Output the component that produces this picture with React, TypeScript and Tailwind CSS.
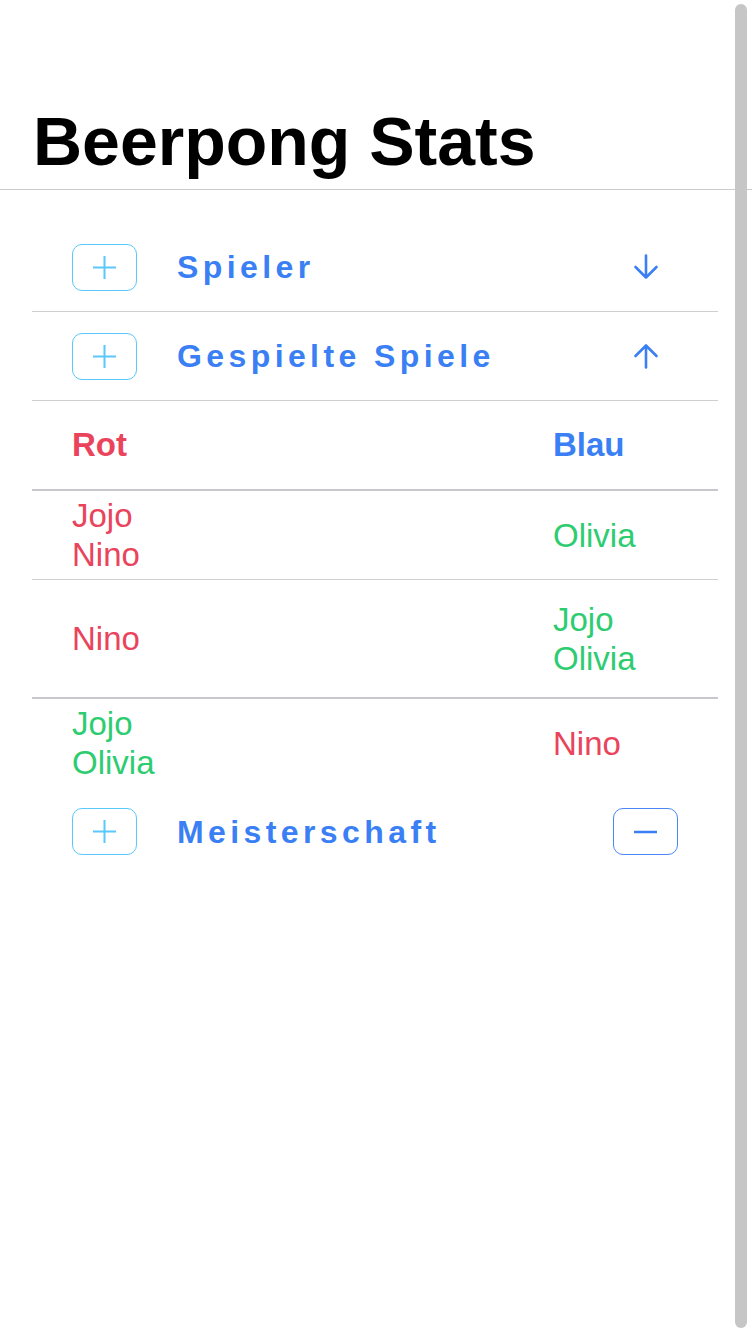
import React from 'react'

const BLUE = 'text-[#3b7ff5]'

function PlusButton() {
  return (
    <div className="flex h-[47px] w-[65px] shrink-0 items-center justify-center rounded-[10px] border-[1.5px] border-[#5ac8fa]">
      <svg width="23" height="23" viewBox="0 0 23 23" fill="none" stroke="#5ac8fa" strokeWidth="2">
        <path d="M11.5 0v23M0 11.5h23" />
      </svg>
    </div>
  )
}

function MinusButton() {
  return (
    <div className="flex h-[47px] w-[65px] shrink-0 items-center justify-center rounded-[10px] border-[1.5px] border-[#4a86f7]">
      <svg width="23" height="4" viewBox="0 0 23 4" fill="none" stroke="#3b7ff5" strokeWidth="2.5">
        <path d="M0 2h23" />
      </svg>
    </div>
  )
}

function Arrow({ up }: { up?: boolean }) {
  return (
    <div className="flex w-[65px] shrink-0 justify-center">
      <svg
        width="26"
        height="26"
        viewBox="0 0 26 26"
        fill="none"
        stroke="#3b7ff5"
        strokeWidth="2.6"
        strokeLinecap="round"
        strokeLinejoin="round"
        className={up ? 'rotate-180' : ''}
      >
        <path d="M13 1.5v22M2.5 13l10.5 10.5L23.5 13" />
      </svg>
    </div>
  )
}

function SectionRow({ label, right, border = true }: { label: string; right: React.ReactNode; border?: boolean }) {
  return (
    <div className={`flex h-[89px] items-center px-10 ${border ? 'border-b border-[#cfcfd2]' : ''}`}>
      <PlusButton />
      <span className={`ml-10 flex-1 text-[32px] font-bold tracking-[4.4px] ${BLUE}`}>{label}</span>
      {right}
    </div>
  )
}

const RED = 'text-[#e9445c]'
const GREEN = 'text-[#2ecc71]'

const GAMES = [
  { red: ['Jojo', 'Nino'], redCls: RED, blue: ['Olivia'], blueCls: GREEN, h: 'h-[89px] border-b border-[#cfcfd2]' },
  { red: ['Nino'], redCls: RED, blue: ['Jojo', 'Olivia'], blueCls: GREEN, h: 'h-[119px] border-b-2 border-[#c8c8cc]' },
  { red: ['Jojo', 'Olivia'], redCls: GREEN, blue: ['Nino'], blueCls: RED, h: 'h-[88px]' },
]

export default function App() {
  return (
    <div className="relative min-h-[1336px] bg-white font-['Liberation_Sans',Arial,sans-serif]">
      <header className="border-b border-[#cccccc] px-[33px] pb-[14px] pt-[107px]">
        <h1 className="text-[68px] font-bold leading-[68px] text-black">Beerpong Stats</h1>
      </header>

      <div className="ml-8 mr-[34px] mt-[33px]">
        <SectionRow label="Spieler" right={<Arrow />} />
        <SectionRow label="Gespielte Spiele" right={<Arrow up />} />

        <div className="flex h-[90px] items-center border-b-2 border-[#c8c8cc] pl-10 text-[33px] font-bold">
          <span className={`flex-1 ${RED}`}>Rot</span>
          <span className={`w-[165px] ${BLUE}`}>Blau</span>
        </div>

        {GAMES.map((g, i) => (
          <div key={i} className={`flex items-center pl-10 text-[33px] leading-[39px] ${g.h}`}>
            <div className={`flex flex-1 flex-col ${g.redCls}`}>
              {g.red.map((n) => (
                <span key={n}>{n}</span>
              ))}
            </div>
            <div className={`flex w-[165px] flex-col ${g.blueCls}`}>
              {g.blue.map((n) => (
                <span key={n}>{n}</span>
              ))}
            </div>
          </div>
        ))}

        <SectionRow label="Meisterschaft" right={<MinusButton />} border={false} />
      </div>

      {/* scrollbar thumb */}
      <div className="absolute right-[5px] top-[4px] h-[1324px] w-[12px] rounded-full bg-[#c6c6c6]" />
    </div>
  )
}
